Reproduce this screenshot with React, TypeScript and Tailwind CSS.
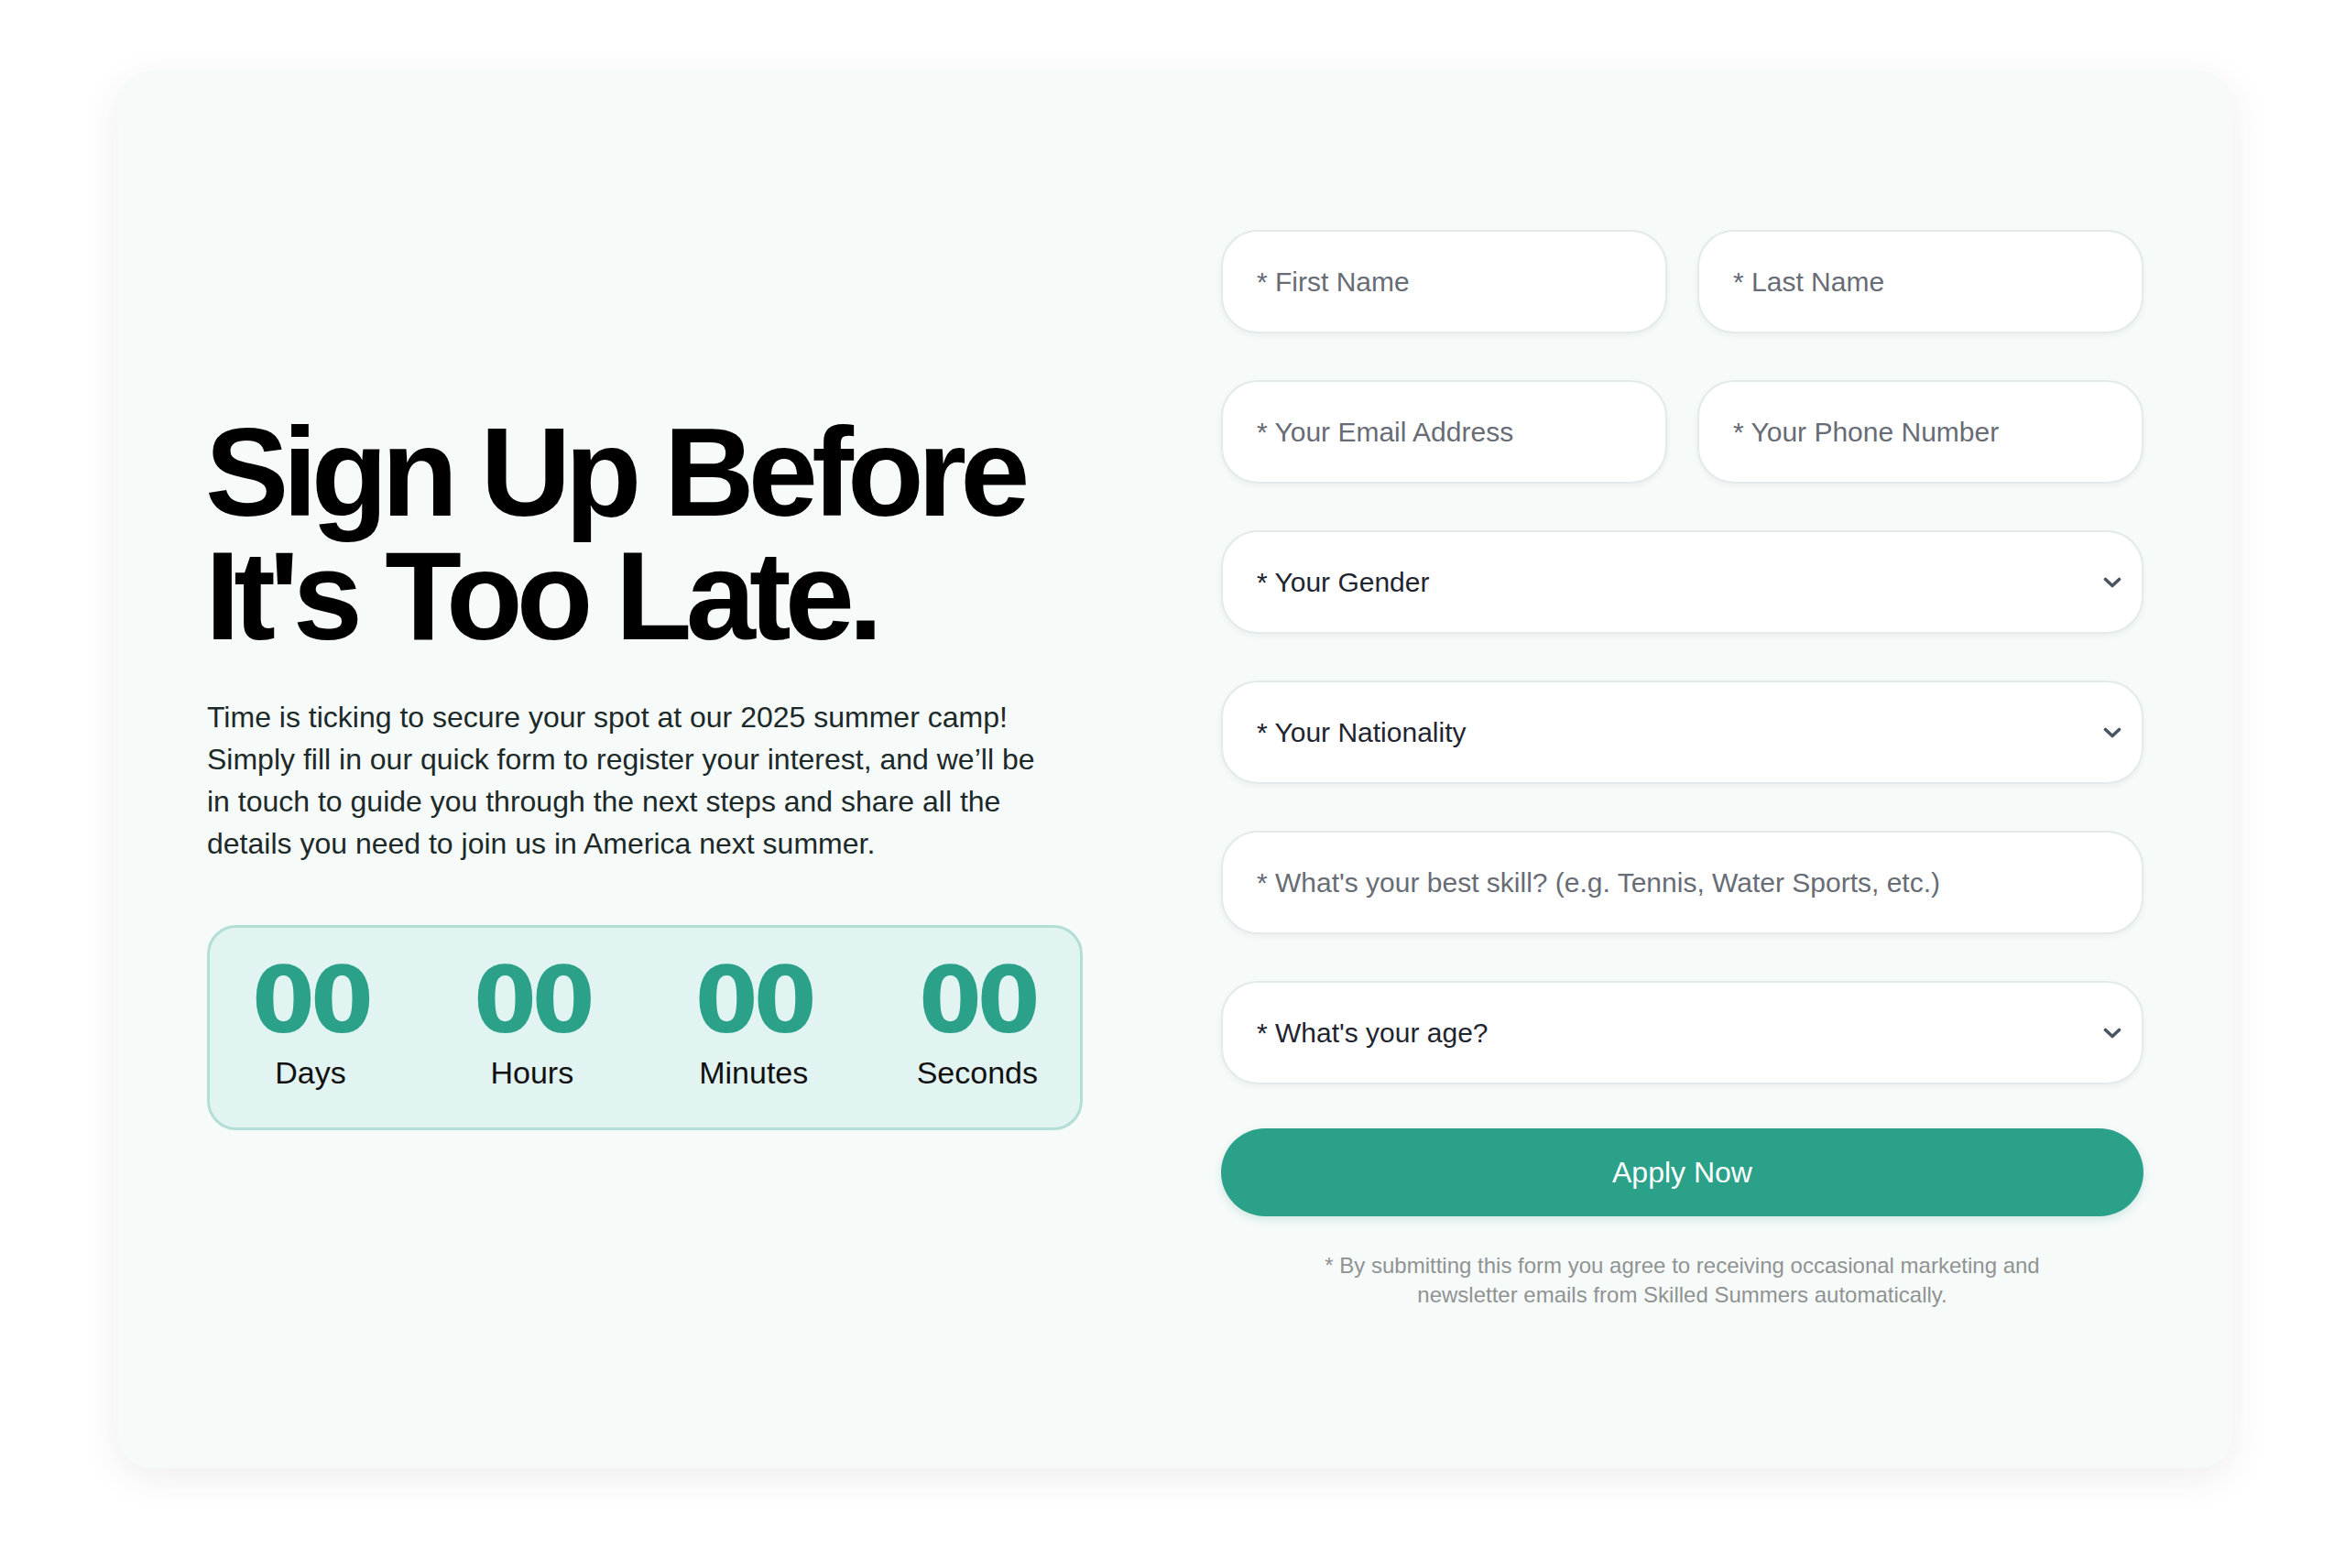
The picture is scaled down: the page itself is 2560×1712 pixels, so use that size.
import React from 'react';

const sans = { fontFamily: '"Liberation Sans", Arial, Helvetica, sans-serif' };

function Chevron() {
  return (
    <svg width="20" height="12" viewBox="0 0 20 12" fill="none" className="shrink-0">
      <polyline points="2.5,2.5 10,9.5 17.5,2.5" stroke="#4b5563" strokeWidth="3.6" strokeLinecap="round" strokeLinejoin="round" />
    </svg>
  );
}

function Field({ label, select = false, dark = false }: { label: string; select?: boolean; dark?: boolean }) {
  return (
    <div className="flex h-[113px] items-center justify-between rounded-[40px] border-2 border-[#e2eaea] bg-white pl-[37px] pr-[22px] shadow-[0_3px_6px_rgba(30,60,60,0.05)]">
      <span className={`text-[30px] leading-none ${dark ? 'text-[#1f2530]' : 'text-[#676c75]'}`}>{label}</span>
      {select && <Chevron />}
    </div>
  );
}

function TimeUnit({ label }: { label: string }) {
  return (
    <div className="flex flex-col items-center">
      <span
        className="text-[99px] font-bold leading-[100px] tracking-[-0.05em] text-[#2ba18a]"
        style={{ fontFamily: '"DejaVu Sans", Verdana, sans-serif' }}
      >
        00
      </span>
      <span className="mt-[8px] text-[34px] leading-[40px] text-[#111111]">{label}</span>
    </div>
  );
}

export default function App() {
  return (
    <div className="min-h-screen bg-white pl-[129px] pt-[78px] pb-[109px]" style={sans}>
      <div className="flex h-[1525px] w-[2308px] items-center rounded-[36px] bg-[#f6faf9] px-[97px] shadow-[0_10px_40px_rgba(80,60,60,0.09)]">
        <div className="grid w-full grid-cols-2 items-center gap-[100px]">
          {/* left */}
          <div className="flex flex-col">
            <h1 className="-ml-[2px] text-[137px] font-bold leading-[135px] tracking-[-0.05em] text-black">
              Sign Up Before
              <br />
              It's Too Late.
            </h1>
            <p className="mt-[42px] w-[915px] text-[32px] leading-[46px] text-[#1c2929]">
              Time is ticking to secure your spot at our 2025 summer camp! Simply fill in our quick form to register your interest, and we’ll be in touch to guide you through the next steps and share all the details you need to join us in America next summer.
            </p>
            <div className="mt-[66px] flex h-[224px] w-[956px] items-start justify-between rounded-[32px] border-[3px] border-[#b3ded6] bg-[#e1f4f1] px-[46px] pt-[30px]">
              <TimeUnit label="Days" />
              <TimeUnit label="Hours" />
              <TimeUnit label="Minutes" />
              <TimeUnit label="Seconds" />
            </div>
          </div>

          {/* right */}
          <div className="flex flex-col">
            <div className="flex flex-col gap-[51px]">
              <div className="grid grid-cols-2 gap-[33px]">
                <Field label="* First Name" />
                <Field label="* Last Name" />
              </div>
              <div className="grid grid-cols-2 gap-[33px]">
                <Field label="* Your Email Address" />
                <Field label="* Your Phone Number" />
              </div>
              <Field label="* Your Gender" select dark />
              <Field label="* Your Nationality" select dark />
              <Field label="* What's your best skill? (e.g. Tennis, Water Sports, etc.)" />
              <Field label="* What's your age?" select dark />
            </div>
            <button className="mt-[48px] flex h-[96px] w-full items-center justify-center rounded-full bg-[#2ba18a] text-[32px] text-white shadow-[0_4px_10px_rgba(43,161,138,0.18)]">
              Apply Now
            </button>
            <p className="mt-[38px] text-center text-[24px] leading-[32px] text-[#909393]">
              * By submitting this form you agree to receiving occasional marketing and
              <br />
              newsletter emails from Skilled Summers automatically.
            </p>
          </div>
        </div>
      </div>
    </div>
  );
}
